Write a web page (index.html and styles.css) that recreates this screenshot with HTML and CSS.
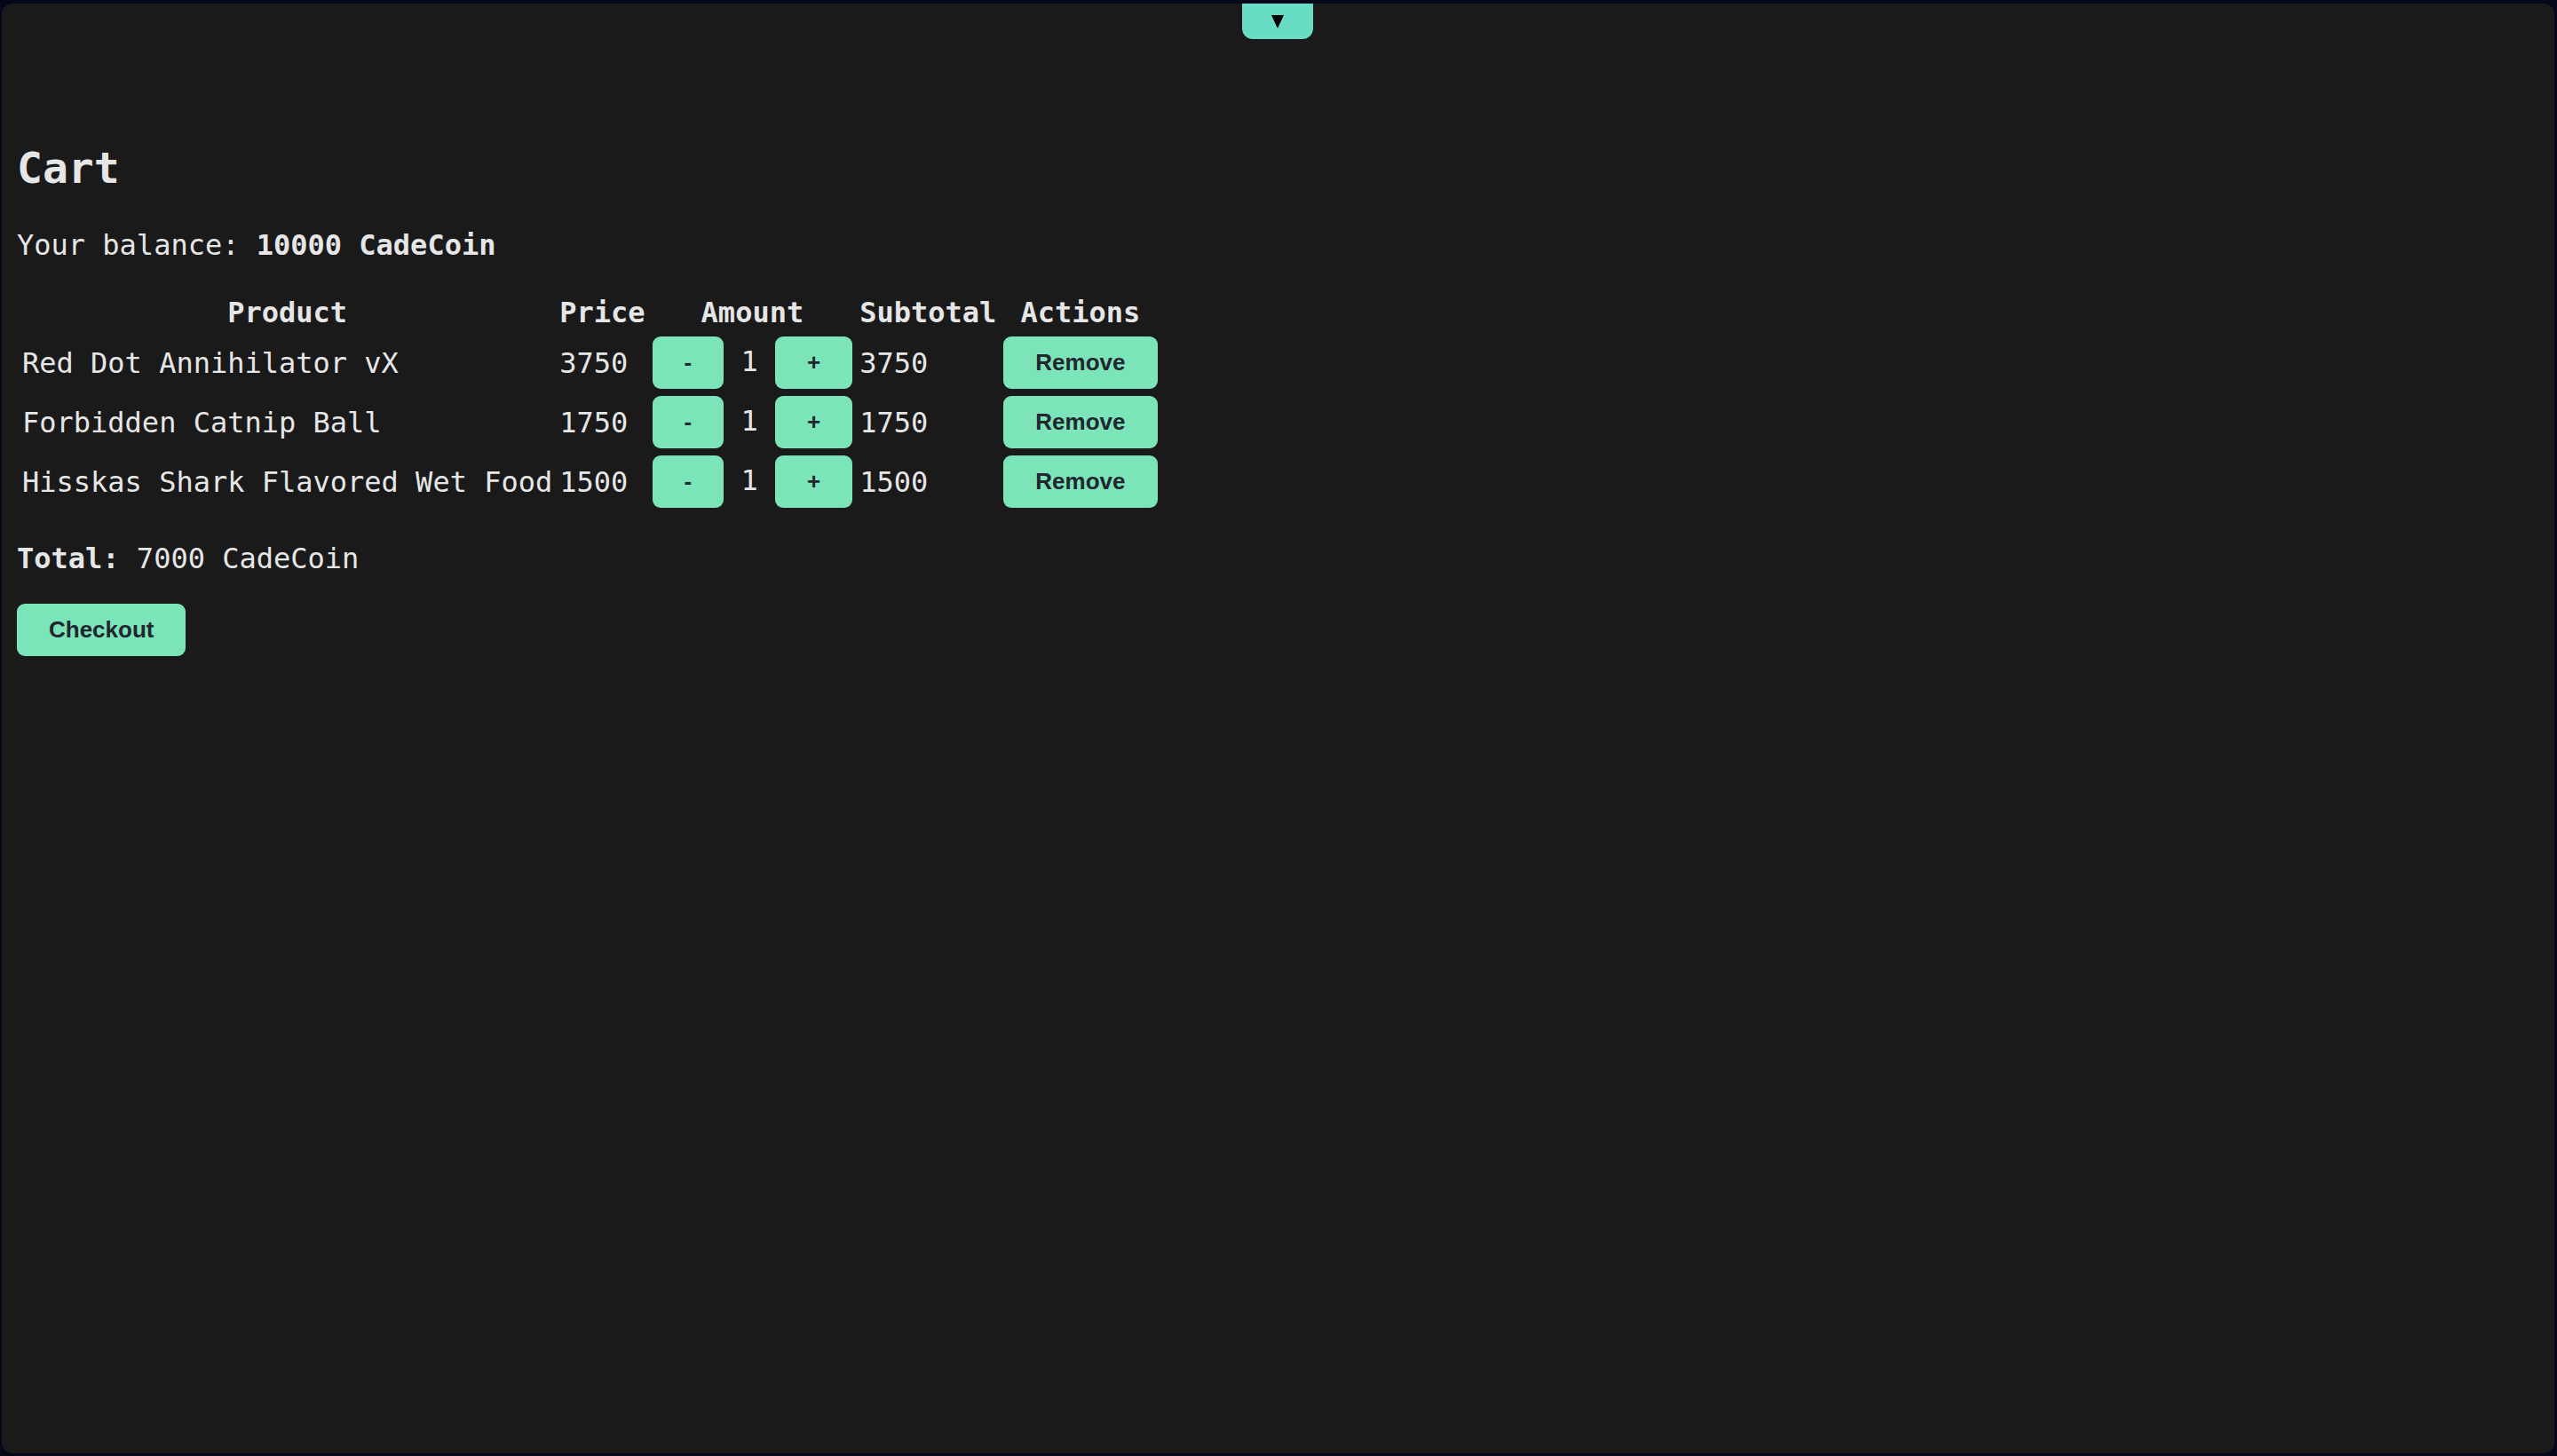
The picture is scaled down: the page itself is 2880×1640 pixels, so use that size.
FILE: index.html
```html
<!DOCTYPE html>
<html lang="en">
<head>
<meta charset="utf-8">
<title>Cart</title>
<link rel="stylesheet" href="styles.css">
</head>
<body>
<div class="panel">
  <button class="toggle" aria-label="Toggle">
    <svg width="14" height="15" viewBox="0 0 14 15"><polygon points="0,0 14,0 7,15" fill="#000"/></svg>
  </button>
  <main class="content">
    <h2 class="title">Cart</h2>
    <p class="line">Your balance: <strong>10000 CadeCoin</strong></p>
    <table class="cart">
      <thead>
        <tr><th>Product</th><th>Price</th><th>Amount</th><th>Subtotal</th><th>Actions</th></tr>
      </thead>
      <tbody>
        <tr><td>Red Dot Annihilator vX</td><td>3750</td><td><button class="btn">-</button> 1 <button class="btn">+</button></td><td>3750</td><td><button class="btn">Remove</button></td></tr>
        <tr><td>Forbidden Catnip Ball</td><td>1750</td><td><button class="btn">-</button> 1 <button class="btn">+</button></td><td>1750</td><td><button class="btn">Remove</button></td></tr>
        <tr><td>Hisskas Shark Flavored Wet Food</td><td>1500</td><td><button class="btn">-</button> 1 <button class="btn">+</button></td><td>1500</td><td><button class="btn">Remove</button></td></tr>
      </tbody>
    </table>
    <p class="line"><strong>Total:</strong> 7000 CadeCoin</p>
    <button class="btn">Checkout</button>
  </main>
</div>
</body>
</html>
```
FILE: styles.css
```css
html, body {
  margin: 0;
  padding: 0;
  height: 100%;
}
body {
  background: #050818;
  font-family: "DejaVu Sans Mono", monospace;
  color: #e6e6e6;
  overflow: hidden;
}
.panel {
  position: relative;
  box-sizing: border-box;
  margin: 4px 3px 0 2px;
  height: calc(100vh - 7px);
  background: #1a1a1a;
  border-radius: 12px;
}
.toggle {
  position: absolute;
  top: 0;
  left: calc(50% - 41px);
  width: 80px;
  height: 40px;
  border: none;
  padding: 0;
  background: #68dcc4;
  border-radius: 0 0 12px 12px;
  display: flex;
  align-items: center;
  justify-content: center;
}
.content {
  display: block;
  padding: 117px 16px 0 17px;
  font-size: 32px;
}
.title {
  font-size: 48px;
  font-weight: bold;
  margin: 40px 0 40px 0;
  line-height: normal;
}
.line {
  margin: 0 0 32px 0;
  font-size: 32px;
}
.cart {
  border-spacing: 4px;
  margin: 0 0 32px 0;
  font-size: 32px;
}
.cart th, .cart td {
  padding: 2px;
  font-weight: normal;
  white-space: nowrap;
}
.cart th {
  font-weight: bold;
  text-align: center;
}
.cart td {
  text-align: left;
  vertical-align: middle;
}
.btn {
  font-family: "Liberation Sans", Arial, sans-serif;
  font-weight: bold;
  font-size: 26px;
  line-height: 30px;
  color: #22262e;
  background: #7be4b9;
  border: none;
  border-radius: 9px;
  padding: 14px 36px 15px;
  margin: 0;
  vertical-align: middle;
}
```
